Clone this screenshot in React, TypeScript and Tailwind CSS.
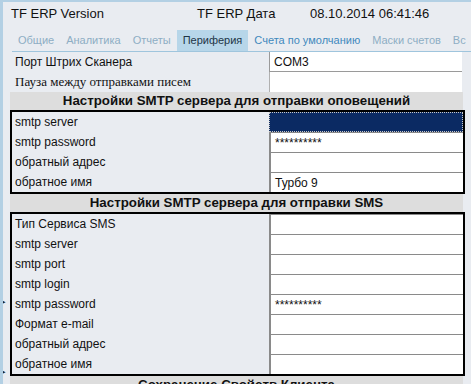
import React from "react";

const font = { fontFamily: '"Liberation Sans", Arial, sans-serif' };

function Input({ value, selected }: { value?: string; selected?: boolean }) {
  if (selected) {
    return <div className="flex-1 h-full bg-[#0b2a63] border border-dotted border-[#c8c8c8]" />;
  }
  return (
    <div className="flex-1 h-full bg-white border-l-2 border-t border-[#8a8a8a] flex items-center pl-[4px] text-[12px] text-[#111]">
      {value}
    </div>
  );
}

function Row({ label, value, selected }: { label: string; value?: string; selected?: boolean }) {
  return (
    <div className="flex h-[20px] items-stretch">
      <div className="w-[257px] flex items-center pl-[3px] text-[12px] text-[#111]">{label}</div>
      <Input value={value} selected={selected} />
    </div>
  );
}

function SectionHeader({ title }: { title: string }) {
  return (
    <div className="h-[18px] mr-[2px] bg-[#dddddd] flex items-center justify-center text-[13.3px] font-bold text-[#111] whitespace-nowrap">
      {title}
    </div>
  );
}

function Tab({ label, active, color }: { label: string; active?: boolean; color?: string }) {
  return (
    <div
      className={
        "h-full flex items-center px-[6px] text-[11px] " +
        (active ? "bg-[#b7d6e9] text-[#1d3547]" : color === "blue" ? "text-[#4189bd]" : "text-[#8eaec4]")
      }
    >
      {label}
    </div>
  );
}

function Sep() {
  return <div className="w-px h-[18px] self-center bg-[#a9cbe0]" />;
}

export default function App() {
  return (
    <div
      className="w-[471px] h-[384px] overflow-hidden bg-[#e9ecf1] border-t-2 border-l-[3px] border-[#b3d0e4] relative"
      style={font}
    >
      <div className="flex h-[24px] items-center pl-[8px] text-[13px] text-[#111]">
        <span className="w-[186px]">TF ERP Version</span>
        <span className="w-[113px]">TF ERP Дата</span>
        <span>08.10.2014 06:41:46</span>
      </div>
      <div className="mt-[4px] ml-[9px] h-[22px] flex border-b border-[#9fc5dd] whitespace-nowrap">
        <div className="w-[4px]" />
        <Tab label="Общие" />
        <Sep />
        <Tab label="Аналитика" />
        <Sep />
        <Tab label="Отчеты" />
        <div className="w-[1px]" />
        <Tab label="Периферия" active />
        <Tab label="Счета по умолчанию" color="blue" />
        <Sep />
        <Tab label="Маски счетов" />
        <Sep />
        <Tab label="Вс" />
      </div>
      <div className="ml-[7px] w-[455px]">
        <div className="pl-[2px] pr-[3px]">
          <div className="flex h-[20px] items-stretch">
            <div className="w-[257px] flex items-center pl-[3px] text-[12px] text-[#111]">Порт Штрих Сканера</div>
            <div className="flex-1 h-full bg-white border-l border-b border-[#9a9a9a] flex items-center pl-[4px] text-[12px] text-[#111]">
              COM3
            </div>
          </div>
          <div className="flex h-[20px] items-stretch">
            <div
              className="w-[257px] flex items-center pl-[3px] text-[13px] text-[#111]"
              style={{ fontFamily: '"Liberation Serif", "Times New Roman", serif' }}
            >
              Пауза между отправками писем
            </div>
            <div className="flex-1 h-full bg-white border-l border-[#b0b0b0]" />
          </div>
        </div>
        <SectionHeader title="Настройки SMTP сервера для отправки оповещений" />
        <div className="border-2 border-black">
          <Row label="smtp server" selected />
          <Row label="smtp password" value="**********" />
          <Row label="обратный адрес" />
          <Row label="обратное имя" value="Турбо 9" />
        </div>
        <SectionHeader title="Настройки SMTP сервера для отправки SMS" />
        <div className="border-2 border-black">
          <Row label="Тип Сервиса SMS" />
          <Row label="smtp server" />
          <Row label="smtp port" />
          <Row label="smtp login" />
          <Row label="smtp password" value="**********" />
          <Row label="Формат e-mail" />
          <Row label="обратный адрес" />
          <Row label="обратное имя" />
        </div>
        <SectionHeader title="Сохранение Свойств Клиента" />
      </div>
      <div className="absolute left-[-1px] top-[284px] h-[100px] border-l border-dotted border-[#6b7f8f]" />
      <div className="absolute left-[-1px] top-[296px] text-[7px] leading-none text-[#222]">▸</div>
      <div className="absolute left-[-1px] top-[366px] text-[7px] leading-none text-[#222]">▸</div>
    </div>
  );
}
